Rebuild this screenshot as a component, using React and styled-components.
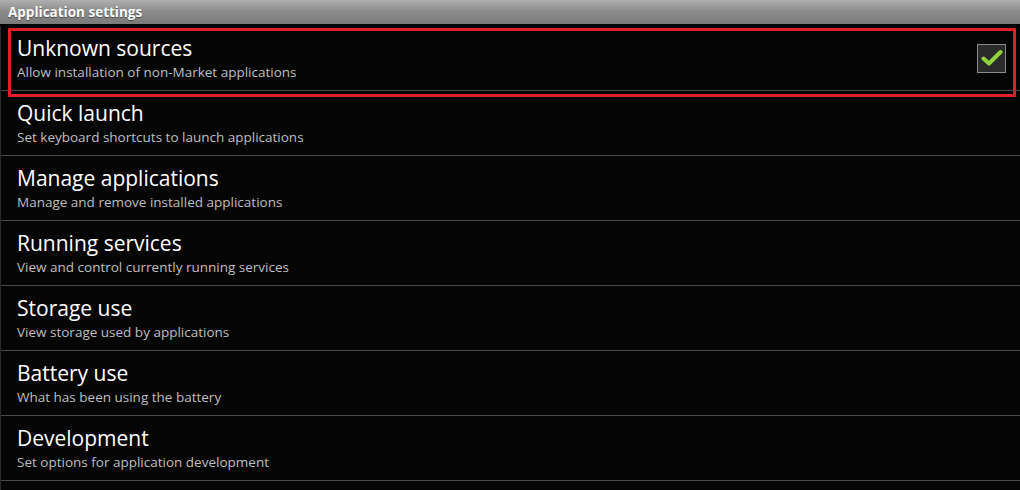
import React, { useState } from 'react';
import styled, { createGlobalStyle } from 'styled-components';

const GlobalStyle = createGlobalStyle`
  html, body {
    margin: 0;
    padding: 0;
    background: #000;
  }
  body {
    font-family: "Open Sans", "DejaVu Sans", sans-serif;
    overflow: hidden;
  }
`;

const Screen = styled.div`
  width: 1020px;
  height: 490px;
  background: #050505;
  display: flex;
  flex-direction: column;
  overflow: hidden;
`;

const Header = styled.div`
  height: 24px;
  flex: 0 0 24px;
  display: flex;
  align-items: center;
  padding-left: 8px;
  background: linear-gradient(#b0b0b0, #8c8c8c 45%, #7a7a7a);
  border-bottom: 2px solid #000;
  color: #fff;
  font-size: 13.5px;
  font-weight: 700;
  text-shadow: 0 1px 1px rgba(0, 0, 0, 0.45);
`;

const List = styled.div`
  flex: 1;
  display: flex;
  flex-direction: column;
  border-left: 1px solid #2a2a2a;
`;

const Row = styled.div`
  position: relative;
  height: 65px;
  flex: 0 0 65px;
  box-sizing: border-box;
  display: flex;
  align-items: center;
  padding: 0 14px 0 16px;
  border-bottom: 1px solid #4b4b4b;
`;

const Texts = styled.div`
  flex: 1;
  display: flex;
  flex-direction: column;
  margin-top: 1px;
`;

const Title = styled.div`
  color: #fff;
  font-size: 21px;
  line-height: 27px;
`;

const Summary = styled.div`
  color: #bfbfbf;
  font-size: 13.5px;
  line-height: 19px;
  margin-top: 1px;
`;

const Highlight = styled.div`
  position: absolute;
  left: 7px;
  right: 4px;
  top: 2px;
  height: 69px;
  box-sizing: border-box;
  border: 3px solid #e21e26;
  pointer-events: none;
`;

const CheckBox = styled.button`
  width: 29px;
  height: 29px;
  padding: 0;
  box-sizing: border-box;
  border: 1px solid #8a8a8a;
  background: #2a2a2a;
  display: flex;
  align-items: center;
  justify-content: center;
  cursor: pointer;
`;

const items = [
  { title: 'Quick launch', summary: 'Set keyboard shortcuts to launch applications' },
  { title: 'Manage applications', summary: 'Manage and remove installed applications' },
  { title: 'Running services', summary: 'View and control currently running services' },
  { title: 'Storage use', summary: 'View storage used by applications' },
  { title: 'Battery use', summary: 'What has been using the battery' },
  { title: 'Development', summary: 'Set options for application development' },
];

const Check = () => (
  <svg width="22" height="18" viewBox="0 0 22 18">
    <path
      d="M2.5 9.5 L8 14.5 L19.5 3"
      fill="none"
      stroke="#8ed43a"
      strokeWidth="4"
      strokeLinecap="round"
      strokeLinejoin="round"
    />
  </svg>
);

const App = () => {
  const [unknown, setUnknown] = useState(true);

  return (
    <Screen>
      <GlobalStyle />
      <Header>Application settings</Header>
      <List>
        <Row>
          <Texts>
            <Title>Unknown sources</Title>
            <Summary>Allow installation of non-Market applications</Summary>
          </Texts>
          <CheckBox onClick={() => setUnknown(!unknown)} aria-label="Unknown sources">
            {unknown && <Check />}
          </CheckBox>
          <Highlight />
        </Row>
        {items.map(item => (
          <Row key={item.title}>
            <Texts>
              <Title>{item.title}</Title>
              <Summary>{item.summary}</Summary>
            </Texts>
          </Row>
        ))}
      </List>
    </Screen>
  );
};

export default App;
